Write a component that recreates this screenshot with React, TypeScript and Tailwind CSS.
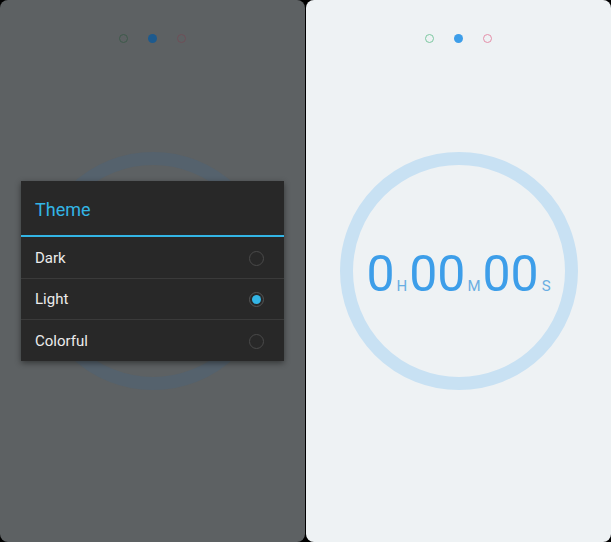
import React from 'react';

const font = { fontFamily: 'Roboto, "Noto Sans", sans-serif' };

function Dots({ dim }: { dim: boolean }) {
  return (
    <div className="flex items-center gap-[20px] pt-[34px] h-[43px]">
      <span className={`w-[9px] h-[9px] rounded-full border ${dim ? 'border-[#3d5a4a]' : 'border-[#7cc8a0]'}`} />
      <span className={`w-[9px] h-[9px] rounded-full ${dim ? 'bg-[#1d5a8e]' : 'bg-[#3d9ee9]'}`} />
      <span className={`w-[9px] h-[9px] rounded-full border ${dim ? 'border-[#6e4f58]' : 'border-[#e58fa9]'}`} />
    </div>
  );
}

function Radio({ checked }: { checked?: boolean }) {
  return (
    <span
      className={`w-[15px] h-[15px] rounded-full border-[1.5px] flex items-center justify-center ${checked ? 'border-[#555]' : 'border-[#4a4a4a]'}`}
    >
      {checked && <span className="w-[9px] h-[9px] rounded-full bg-[#33b5e5]" />}
    </span>
  );
}

function Timer() {
  const digit = 'text-[50px] font-normal leading-none text-[#3d9ee9]';
  const unit = 'text-[15px] leading-none text-[#6aaee2] mx-[2px]';
  return (
    <div className="flex items-baseline pt-[6px] pl-[2px]" style={font}>
      <span className={digit}>0</span>
      <span className={unit}>H</span>
      <span className={digit}>00</span>
      <span className={unit}>M</span>
      <span className={digit}>00</span>
      <span className={`${unit} ml-[3px]`}>S</span>
    </div>
  );
}

export default function App() {
  const opciones = [
    { nombre: 'Dark', activo: false },
    { nombre: 'Light', activo: true },
    { nombre: 'Colorful', activo: false },
  ];

  return (
    <div className="w-[611px] h-[542px] bg-black flex gap-px overflow-hidden" style={font}>
      {/* panel oscuro con el dialogo */}
      <div className="relative w-[305px] h-full rounded-[8px] bg-[#5d6163] flex flex-col items-center">
        <Dots dim />
        <div className="mt-[109px] w-[238px] h-[238px] rounded-full border-[13px] border-[#55626d]" />

        <div className="absolute left-[21px] top-[181px] w-[263px] bg-[#282828] shadow-[0_2px_6px_rgba(0,0,0,0.45)]">
          <div className="h-[54px] flex items-center pl-[14px] pt-[2px] text-[18px] text-[#33b5e5]">Theme</div>
          <div className="h-[2px] bg-[#33b5e5]" />
          {opciones.map((o, i) => (
            <div
              key={o.nombre}
              className={`h-[41px] flex items-center justify-between pl-[14px] pr-[20px] pt-[1px] ${i > 0 ? 'border-t border-[#3a3a3a]' : ''} ${i === 2 ? 'h-[42px]' : ''}`}
            >
              <span className="text-[15px] text-[#ececec]">{o.nombre}</span>
              <Radio checked={o.activo} />
            </div>
          ))}
        </div>
      </div>

      {/* panel claro con el cronometro */}
      <div className="w-[305px] h-full rounded-[8px] bg-[#eef2f4] flex flex-col items-center">
        <Dots dim={false} />
        <div className="mt-[109px] w-[238px] h-[238px] rounded-full border-[13px] border-[#c8e1f3] flex items-center justify-center">
          <Timer />
        </div>
      </div>
    </div>
  );
}
